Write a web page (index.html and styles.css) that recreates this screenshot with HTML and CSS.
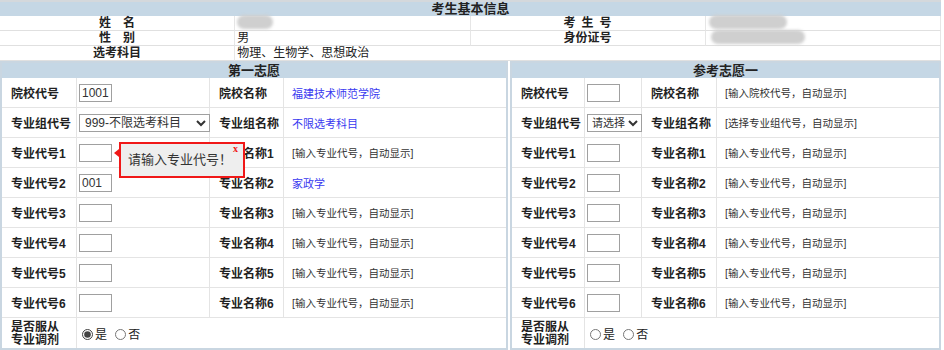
FILE: index.html
```html
<!DOCTYPE html>
<html lang="zh-CN">
<head>
    <meta charset="UTF-8">
    <title>考生基本信息</title>
    <link rel="stylesheet" href="styles.css">
</head>
<body>
<div class="page">
    <table class="info">
        <tr><th colspan="4" class="title">考生基本信息</th></tr>
        <tr>
            <td class="lbl">姓&emsp;名</td>
            <td class="val"><span class="blur name"></span></td>
            <td class="lbl spaced">考生号</td>
            <td class="val"><span class="blur id1"></span></td>
        </tr>
        <tr>
            <td class="lbl">性&emsp;别</td>
            <td class="val">男</td>
            <td class="lbl">身份证号</td>
            <td class="val"><span class="blur id2"></span></td>
        </tr>
        <tr>
            <td class="lbl">选考科目</td>
            <td class="val" colspan="3">物理、生物学、思想政治</td>
        </tr>
    </table>

    <div class="choices">
        <div class="panel left">
            <table class="form">
                <colgroup><col class="c1"><col class="c2"><col class="c3"><col class="c4"></colgroup>
                <tr><th colspan="4">第一志愿</th></tr>
                <tr>
                    <td class="key">院校代号</td>
                    <td class="inp"><input class="code" type="text" value="1001"></td>
                    <td class="key">院校名称</td>
                    <td class="out blue">福建技术师范学院</td>
                </tr>
                <tr>
                    <td class="key">专业组代号</td>
                    <td class="inp"><select class="group"><option>999-不限选考科目</option></select></td>
                    <td class="key">专业组名称</td>
                    <td class="out blue">不限选考科目</td>
                </tr>
                <tr>
                    <td class="key">专业代号1</td>
                    <td class="inp tip-host">
                        <input class="code" type="text">
                        <div class="tip">
                            <span class="tip-arrow"></span>
                            <span class="tip-text">请输入专业代号！</span>
                            <span class="tip-close">x</span>
                        </div>
                    </td>
                    <td class="key">专业名称1</td>
                    <td class="out">[输入专业代号，自动显示]</td>
                </tr>
                <tr>
                    <td class="key">专业代号2</td>
                    <td class="inp"><input class="code" type="text" value="001"></td>
                    <td class="key">专业名称2</td>
                    <td class="out blue">家政学</td>
                </tr>
                <tr>
                    <td class="key">专业代号3</td>
                    <td class="inp"><input class="code" type="text"></td>
                    <td class="key">专业名称3</td>
                    <td class="out">[输入专业代号，自动显示]</td>
                </tr>
                <tr>
                    <td class="key">专业代号4</td>
                    <td class="inp"><input class="code" type="text"></td>
                    <td class="key">专业名称4</td>
                    <td class="out">[输入专业代号，自动显示]</td>
                </tr>
                <tr>
                    <td class="key">专业代号5</td>
                    <td class="inp"><input class="code" type="text"></td>
                    <td class="key">专业名称5</td>
                    <td class="out">[输入专业代号，自动显示]</td>
                </tr>
                <tr>
                    <td class="key">专业代号6</td>
                    <td class="inp"><input class="code" type="text"></td>
                    <td class="key">专业名称6</td>
                    <td class="out">[输入专业代号，自动显示]</td>
                </tr>
                <tr class="last">
                    <td class="key two">是否服从<br>专业调剂</td>
                    <td class="inp radios" colspan="3">
                        <label><input type="radio" name="adj1" checked>是</label>
                        <label><input type="radio" name="adj1">否</label>
                    </td>
                </tr>
            </table>
        </div>

        <div class="panel right">
            <table class="form">
                <colgroup><col class="r1"><col class="r2"><col class="r3"><col class="r4"></colgroup>
                <tr><th colspan="4">参考志愿一</th></tr>
                <tr>
                    <td class="key">院校代号</td>
                    <td class="inp"><input class="code" type="text"></td>
                    <td class="key">院校名称</td>
                    <td class="out">[输入院校代号，自动显示]</td>
                </tr>
                <tr>
                    <td class="key">专业组代号</td>
                    <td class="inp"><select class="group small"><option>请选择</option></select></td>
                    <td class="key">专业组名称</td>
                    <td class="out">[选择专业组代号，自动显示]</td>
                </tr>
                <tr>
                    <td class="key">专业代号1</td>
                    <td class="inp"><input class="code" type="text"></td>
                    <td class="key">专业名称1</td>
                    <td class="out">[输入专业代号，自动显示]</td>
                </tr>
                <tr>
                    <td class="key">专业代号2</td>
                    <td class="inp"><input class="code" type="text"></td>
                    <td class="key">专业名称2</td>
                    <td class="out">[输入专业代号，自动显示]</td>
                </tr>
                <tr>
                    <td class="key">专业代号3</td>
                    <td class="inp"><input class="code" type="text"></td>
                    <td class="key">专业名称3</td>
                    <td class="out">[输入专业代号，自动显示]</td>
                </tr>
                <tr>
                    <td class="key">专业代号4</td>
                    <td class="inp"><input class="code" type="text"></td>
                    <td class="key">专业名称4</td>
                    <td class="out">[输入专业代号，自动显示]</td>
                </tr>
                <tr>
                    <td class="key">专业代号5</td>
                    <td class="inp"><input class="code" type="text"></td>
                    <td class="key">专业名称5</td>
                    <td class="out">[输入专业代号，自动显示]</td>
                </tr>
                <tr>
                    <td class="key">专业代号6</td>
                    <td class="inp"><input class="code" type="text"></td>
                    <td class="key">专业名称6</td>
                    <td class="out">[输入专业代号，自动显示]</td>
                </tr>
                <tr class="last">
                    <td class="key two">是否服从<br>专业调剂</td>
                    <td class="inp radios" colspan="3">
                        <label><input type="radio" name="adj2">是</label>
                        <label><input type="radio" name="adj2">否</label>
                    </td>
                </tr>
            </table>
        </div>
    </div>
</div>
</body>
</html>
```

FILE: styles.css
```css
body {
    margin: 0;
    background: #fff;
    color: #222;
    font-family: "Liberation Sans", "Noto Sans CJK SC", sans-serif;
    font-size: 12px;
}
.page {
    width: 941px;
}

/* 考生基本信息 */
.info {
    width: 941px;
    border-collapse: separate;
    border-spacing: 0;
    border-top: 2px solid #d4d8dc;
    table-layout: fixed;
}
.info th.title {
    height: 14px;
    padding: 0;
    background: #c5d7e5; /* 浅蓝 */
    font-size: 13px;
    line-height: 14px;
    font-weight: bold;
    text-align: center;
}
.info td {
    box-sizing: border-box;
    height: 15px;
    padding: 0;
    border-bottom: 1px solid #e0e0e0;
    line-height: 14px;
    white-space: nowrap;
    overflow: visible;
}
.info td.lbl {
    width: 236px;
    font-weight: bold;
    text-align: center;
    border-right: 1px solid #e6e6e6;
}
.info td.lbl.spaced {
    letter-spacing: 6px;
    text-indent: 6px;
}
.info td.val {
    padding-left: 2px;
    border-right: 1px solid #e6e6e6;
}
.blur {
    display: inline-block;
    height: 14px;
    margin: -1px 0;
    vertical-align: top;
    border-radius: 7px;
    background: #cfcfcf;
    filter: blur(1.5px);
}
.blur.name { width: 36px; }
.blur.id1 { width: 78px; margin-left: 1px; }
.blur.id2 { width: 94px; margin-left: 3px; }

/* 志愿 */
.choices {
    display: flex;
    gap: 2px;
}
.panel {
    box-sizing: border-box;
    border: 2px solid #c9d6e1;
}
.panel.left { width: 508px; }
.panel.right { width: 431px; }

.form {
    width: 100%;
    border-collapse: separate;
    border-spacing: 0;
    table-layout: fixed;
}
.c1 { width: 75px; }
.c2 { width: 133px; }
.c3 { width: 74px; }
.c4 { width: 222px; }
.r1 { width: 73px; }
.r2 { width: 57px; }
.r3 { width: 75px; }
.r4 { width: 222px; }

.form th {
    height: 15px;
    padding: 0;
    background: #c5d7e5;
    font-size: 13px;
    line-height: 15px;
    font-weight: bold;
    text-align: center;
}
.form td {
    box-sizing: border-box;
    height: 30px;
    padding: 0;
    border-bottom: 1px solid #e4e4e4;
    border-right: 1px solid #e4e4e4;
    white-space: nowrap;
    vertical-align: middle;
}
.form td:last-child {
    border-right: none;
}
.form tr.last td {
    border-bottom: none;
}
.form td.key {
    padding-left: 9px;
    font-weight: bold;
    font-size: 12px;
}
.form td.key.two {
    line-height: 13px;
    padding-top: 2px;
}
.form td.inp {
    padding-left: 2px;
}
.form td.out {
    padding-left: 8px;
    font-size: 10.5px;
    color: #333;
}
.form td.out.blue {
    font-size: 11px;
    color: #3a3af0;
}

input.code {
    box-sizing: border-box;
    width: 33px;
    height: 18px;
    margin: 0;
    padding: 1px 2px;
    border: 1px solid #a0a0a0;
    font-family: "Liberation Sans", sans-serif;
    font-size: 12px;
    color: #333;
    vertical-align: middle;
}
select.group {
    box-sizing: border-box;
    width: 131px;
    height: 18px;
    margin: 0;
    padding: 0 1px;
    border: 1px solid #a0a0a0;
    border-radius: 0;
    background: #fff;
    font-family: "Liberation Sans", "Noto Sans CJK SC", sans-serif;
    font-size: 12px;
    color: #333;
    vertical-align: middle;
}
select.group.small {
    width: 55px;
    padding: 0;
    font-size: 11px;
}

.radios label {
    margin-right: 2px;
    font-size: 12px;
}
.radios input {
    width: 11px;
    height: 11px;
    margin: 0 2px 0 3px;
    vertical-align: -1px;
    accent-color: #444;
}

/* 提示框 */
.tip-host {
    position: relative;
}
.tip {
    position: absolute;
    left: 42px;
    top: 4px;
    box-sizing: border-box;
    width: 126px;
    height: 36px;
    padding: 7px 0 0 7px;
    border: 2px solid #f01818;
    background: #eeeeee;
    font-size: 13px;
    line-height: 18px;
    color: #333;
    font-weight: normal;
}
.tip-arrow {
    position: absolute;
    left: -7px;
    top: 5px;
    width: 0;
    height: 0;
    border-top: 4px solid transparent;
    border-bottom: 4px solid transparent;
    border-right: 5px solid #f01818;
}
.tip-close {
    position: absolute;
    right: 5px;
    top: -1px;
    font-family: "Liberation Serif", serif;
    font-size: 10px;
    line-height: 12px;
    font-weight: bold;
    color: #f01818;
}
```
